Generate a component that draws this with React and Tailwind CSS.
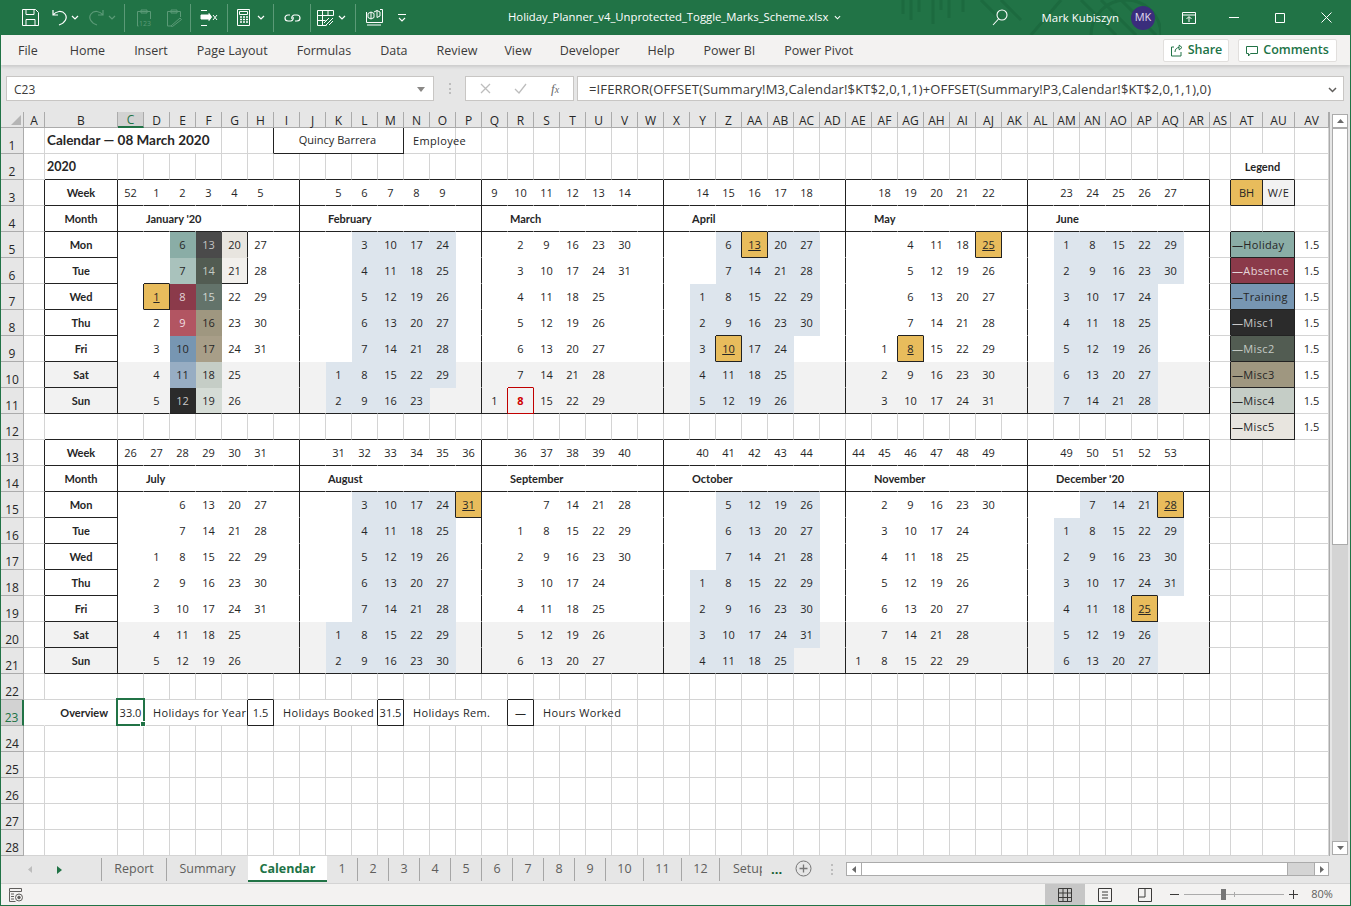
import React from "react";

const LETTERS = "ABCDEFGHIJKLMNOPQRSTUVWXYZ".split("");
const COLS = [...LETTERS, ...LETTERS.slice(0, 22).map((l) => "A" + l)];

// day rows start at Mon; col + dow say where the 1st of the month sits
const MONTHS = [
  { base: 3, start: 2, weekCol: 2, weeks: [52, 1, 2, 3, 4, 5], name: "January '20", col: 3, dow: 2, days: 31 },
  { base: 3, start: 9, weekCol: 10, weeks: [5, 6, 7, 8, 9], name: "February", col: 10, dow: 5, days: 29, shade: true },
  { base: 3, start: 16, weekCol: 16, weeks: [9, 10, 11, 12, 13, 14], name: "March", col: 16, dow: 6, days: 31 },
  { base: 3, start: 23, weekCol: 24, weeks: [14, 15, 16, 17, 18], name: "April", col: 24, dow: 2, days: 30, shade: true, bh: [10, 13] },
  { base: 3, start: 30, weekCol: 31, weeks: [18, 19, 20, 21, 22], name: "May", col: 31, dow: 4, days: 31, bh: [8, 25] },
  { base: 3, start: 37, weekCol: 38, weeks: [23, 24, 25, 26, 27], name: "June", col: 38, dow: 0, days: 30, shade: true },
  { base: 13, start: 2, weekCol: 2, weeks: [26, 27, 28, 29, 30, 31], name: "July", col: 3, dow: 2, days: 31 },
  { base: 13, start: 9, weekCol: 10, weeks: [31, 32, 33, 34, 35, 36], name: "August", col: 10, dow: 5, days: 31, shade: true, bh: [31] },
  { base: 13, start: 16, weekCol: 17, weeks: [36, 37, 38, 39, 40], name: "September", col: 17, dow: 1, days: 30 },
  { base: 13, start: 23, weekCol: 24, weeks: [40, 41, 42, 43, 44], name: "October", col: 24, dow: 3, days: 31, shade: true },
  { base: 13, start: 30, weekCol: 30, weeks: [44, 45, 46, 47, 48, 49], name: "November", col: 30, dow: 6, days: 30 },
  { base: 13, start: 37, weekCol: 38, weeks: [49, 50, 51, 52, 53], name: "December '20", col: 38, dow: 1, days: 31, shade: true, bh: [25, 28] },
];

const JAN_FILLS = {
  6: "bg-[#8aada6]", 7: "bg-[#a9c2bc]", 8: "bg-[#8b3a4a] text-[#e4d5d8]", 9: "bg-[#b25562] text-[#f0dfe2]", 10: "bg-[#7796b2]", 11: "bg-[#97adc3]",
  12: "bg-[#2b2b2b] text-[#c8c8c8]", 13: "bg-[#4a4a4a] text-[#c4c4c4]", 14: "bg-[#525c52] text-[#c4cac4]", 15: "bg-[#63736a] text-[#d0d6d2]",
  16: "bg-[#9f9780]", 17: "bg-[#a89e88]", 18: "bg-[#c5cdc6]", 19: "bg-[#d5dcd6]", 20: "bg-[#e8e5df]", 21: "bg-[#f2f0ec]",
};

const LEGEND = [
  ["—Holiday", "bg-[#8aada6]"],
  ["—Absence", "bg-[#8b3a4a] text-[#e4d5d8]"],
  ["—Training", "bg-[#7796b2]"],
  ["—Misc1", "bg-[#2b2b2b] text-[#c8c8c8]"],
  ["—Misc2", "bg-[#525c52] text-[#c4cac4]"],
  ["—Misc3", "bg-[#9f9780]"],
  ["—Misc4", "bg-[#c5cdc6]"],
  ["—Misc5", "bg-[#e8e5df]"],
];

const DAY_NAMES = ["Mon", "Tue", "Wed", "Thu", "Fri", "Sat", "Sun"];
const BOLD = "font-bold [font-family:Lato,sans-serif] text-[11.5px]";
const WIDE = "tracking-[0.35px]";

const cells = {};
const right = {};
const bottom = {};

const put = (c, r, v) => { cells[c + "," + r] = { ...cells[c + "," + r], ...v }; };
const vLine = (c, r, v = "black") => { right[c + "," + r] = v; };
const hLine = (c, r, v = "black") => { bottom[c + "," + r] = v; };
const box = (c, r, v = "black") => { vLine(c - 1, r, v); vLine(c, r, v); hLine(c, r - 1, v); hLine(c, r, v); };
const inTable = (c, r) => c >= 1 && c <= 43 && ((r >= 3 && r <= 11) || (r >= 13 && r <= 21));

function buildSheet() {
  for (const base of [3, 13]) {
    for (let c = 1; c <= 43; c++) {
      hLine(c, base - 1); hLine(c, base); hLine(c, base + 1); hLine(c, base + 8);
    }
    for (let r = base; r <= base + 8; r++) {
      vLine(0, r); vLine(1, r);
      for (const c of [8, 15, 22, 29, 36, 43]) vLine(c, r);
    }
    put(1, base, { t: "Week", cls: `justify-center ${BOLD}` });
    put(1, base + 1, { t: "Month", cls: `justify-center ${BOLD}` });
    DAY_NAMES.forEach((d, i) => {
      put(1, base + 2 + i, { t: d, cls: `justify-center ${BOLD}` });
      hLine(1, base + 2 + i);
    });
    for (let c = 1; c <= 43; c++) {
      put(c, base + 7, { bg: "bg-[#f2f2f2]" });
      put(c, base + 8, { bg: "bg-[#f2f2f2]" });
    }
  }

  MONTHS.forEach((m) => {
    m.weeks.forEach((w, i) => put(m.weekCol + i, m.base, { t: w, cls: "justify-center text-[10.5px]" }));
    put(m.start + 1, m.base + 1, { t: m.name, cls: `justify-start pl-[2px] ${BOLD}` });
    let col = m.col;
    let dow = m.dow;
    for (let d = 1; d <= m.days; d++) {
      const r = m.base + 2 + dow;
      const v = { t: d, cls: "justify-center" };
      if (m.shade) v.bg = "bg-[#dde5ed]";
      put(col, r, v);
      if (m.bh && m.bh.includes(d)) {
        put(col, r, { bg: "bg-[#e8bc5c]", cls: "justify-center underline" });
        box(col, r);
      }
      if (m.name === "January '20") {
        if (JAN_FILLS[d]) put(col, r, { bg: JAN_FILLS[d] });
        if (d === 1) { put(col, r, { bg: "bg-[#e8bc5c]", cls: "justify-center underline" }); box(col, r); }
        if (d === 20 || d === 21) vLine(col, r);
        if (d === 21) hLine(col, r);
      }
      if (m.name === "March" && d === 8) {
        put(col, r, { cls: "justify-center font-bold text-[#d00000]" });
        box(col, r, "red");
      }
      dow++;
      if (dow > 6) { dow = 0; col++; }
    }
  });

  // title row
  put(1, 1, { t: "Calendar — 08 March 2020", span: 5, cls: "justify-start pl-[2px] pt-[1px] col-span-5 font-bold [font-family:Lato,sans-serif] text-[13.5px]" });
  put(8, 1, { t: "Quincy Barrera", span: 5, cls: "justify-center col-span-5 pr-[2px] pb-[2px]" });
  vLine(7, 1);
  vLine(8, 1);
  hLine(8, 1);
  put(13, 1, { t: "Employee", span: 2, cls: `justify-start pl-[9px] col-span-2 ${WIDE}` });
  put(1, 2, { t: "2020", cls: "justify-start pl-[2px] pt-[2px] font-bold [font-family:Lato,sans-serif] text-[12.5px]" });

  // legend
  put(45, 2, { t: "Legend", span: 2, cls: `justify-center col-span-2 ${BOLD}` });
  put(45, 3, { t: "BH", bg: "bg-[#e8bc5c]", cls: "justify-center" });
  put(46, 3, { t: "W/E", bg: "bg-[#f2f2f2]", cls: `justify-center ${WIDE}` });
  box(45, 3); box(46, 3);
  hLine(46, 4);
  LEGEND.forEach(([label, bg], i) => {
    const r = 5 + i;
    put(45, r, { t: label, span: 2, bg, cls: `justify-start pl-[1px] col-span-2 ${WIDE}` });
    vLine(44, r); vLine(45, r); hLine(45, r); hLine(45, r - 1);
    put(47, r, { t: "1.5", cls: "justify-center" });
  });

  // overview row
  put(0, 23, { noRight: true });
  put(1, 23, { t: "Overview", cls: `justify-end pr-[9px] ${BOLD}` });
  put(2, 23, { t: "33.0", cls: "justify-center text-[10.5px]", selected: true });
  put(3, 23, { t: "Holidays for Year", span: 4, cls: `justify-start pl-[9px] col-span-4 ${WIDE}` });
  put(7, 23, { t: "1.5", cls: "justify-center" });
  box(7, 23);
  vLine(3, 23);
  put(8, 23, { t: "Holidays Booked", span: 4, cls: `justify-start pl-[9px] col-span-4 ${WIDE}` });
  put(12, 23, { t: "31.5", cls: "justify-center text-[10.5px]" });
  box(12, 23);
  vLine(8, 23);
  put(13, 23, { t: "Holidays Rem.", span: 4, cls: `justify-start pl-[9px] col-span-4 ${WIDE}` });
  put(17, 23, { t: "—", cls: "justify-center" });
  box(17, 23);
  vLine(13, 23);
  put(18, 23, { t: "Hours Worked", span: 3, cls: `justify-start pl-[9px] col-span-3 ${WIDE}` });
  vLine(1, 23, "none");
}
buildSheet();

function Cell({ c, r }) {
  const key = c + "," + r;
  const v = cells[key] || {};
  const rv = right[key];
  const bv = bottom[key];
  const table = inTable(c, r);
  let rc = table ? "border-r-transparent" : "border-r-[#d4d4d4]";
  if (rv === "black") rc = "border-r-[#222222]";
  if (rv === "red") rc = "border-r-[#c00000]";
  if (rv === "none" || v.noRight) rc = "border-r-transparent";
  let bc = table ? "border-b-transparent" : "border-b-[#d4d4d4]";
  if (bv === "black") bc = "border-b-[#222222]";
  if (bv === "red") bc = "border-b-[#c00000]";
  return (
    <div className={`relative flex items-center whitespace-nowrap border-r border-b text-[11px] leading-none text-[#262626] ${rc} ${bc} ${v.bg || ""} ${v.cls || ""}`}>
      {v.t}
      {v.selected && (
        <div className="absolute -top-[2px] -left-[2px] z-10 h-[28px] w-[29px] border-2 border-[#217346]">
          <div className="absolute -right-[3px] -bottom-[3px] h-[6px] w-[6px] border border-white bg-[#217346]" />
        </div>
      )}
    </div>
  );
}

function SheetGrid() {
  const out = [];
  out.push(
    <div key="corner" className="relative border-r border-b border-[#ababab] bg-[#e6e6e6]">
      <svg className="absolute right-[2px] bottom-[2px]" width="10" height="10"><path d="M10 0V10H0Z" fill="#b5b5b5" /></svg>
    </div>
  );
  COLS.forEach((name, i) => {
    out.push(
      <div
        key={"h" + name}
        className={`flex items-end justify-center border-r border-b text-[12px] leading-none ${
          i === 2 ? "border-r-[#ababab] border-b-2 border-b-[#217346] bg-[#d2d2d2] text-[#217346]" : "border-r-[#ababab] border-b-[#ababab] bg-[#e6e6e6] text-[#262626]"
        }`}
      >
        {name}
      </div>
    );
  });
  for (let r = 1; r <= 28; r++) {
    out.push(
      <div
        key={"r" + r}
        className={`flex items-end justify-center border-b border-b-[#ababab] pb-[1px] text-[12px] leading-none ${
          r === 23 ? "border-r-2 border-r-[#217346] bg-[#d2d2d2] text-[#217346]" : "border-r border-r-[#ababab] bg-[#e6e6e6] text-[#262626]"
        }`}
      >
        {r}
      </div>
    );
    for (let c = 0; c < COLS.length; c++) {
      const v = cells[c + "," + r];
      out.push(<Cell key={c + "-" + r} c={c} r={r} />);
      if (v && v.span) c += v.span - 1;
    }
  }
  return (
    <div className="grid grid-cols-[23px_21px_73px_repeat(42,26px)_21px_32px_32px_34px] grid-rows-[16px_repeat(28,26px)] bg-white">
      {out}
    </div>
  );
}

function Sep({ cls }) {
  return <div className={`h-[28px] w-px bg-[#5b9a77] ${cls}`} />;
}

function Chev({ dim, cls }) {
  return (
    <svg className={cls} width="8" height="5" viewBox="0 0 8 5" fill="none" stroke={dim ? "#5b9a77" : "#fff"} strokeWidth="1.2">
      <path d="M1 1l3 3 3-3" />
    </svg>
  );
}

function QuickAccess() {
  return (
    <div className="flex items-center text-white">
      <svg className="ml-[21px]" width="17" height="17" viewBox="0 0 17 17" fill="none" stroke="#fff" strokeWidth="1">
        <path d="M.5.5h13l3 3v13H.5z" />
        <path d="M4 .5v5h8v-5M4 16.500v-6h9v6" />
      </svg>
      <svg className="ml-[13px]" width="15" height="17" viewBox="0 0 15 17" fill="none" stroke="#fff" strokeWidth="1.2">
        <path d="M1 1v5h5M1 6c3-4 9-5 12-1s0 9-6 11" />
      </svg>
      <Chev cls="ml-[4px]" />
      <svg className="ml-[10px]" width="15" height="17" viewBox="0 0 15 17" fill="none" stroke="#5b9a77" strokeWidth="1.2">
        <path d="M14 1v5H9M14 6c-3-4-9-5-12-1s0 9 6 11" />
      </svg>
      <Chev dim cls="ml-[4px]" />
      <Sep cls="ml-[8px]" />
      <svg className="ml-[11px]" width="16" height="18" viewBox="0 0 16 18" fill="none" stroke="#5b9a77" strokeWidth="1">
        <path d="M1.500 2.500h13V10M1.500 2.500V17h1" />
        <path d="M5 1h6v3H5z" />
        <text x="3" y="17" fontSize="7" fill="#5b9a77" stroke="none">123</text>
      </svg>
      <svg className="ml-[14px]" width="16" height="18" viewBox="0 0 16 18" fill="none" stroke="#5b9a77" strokeWidth="1">
        <path d="M1.500 2.500h13V8M1.500 2.500V17h4" />
        <path d="M5 1h6v3H5zM5 17l9-8 1.500 1.500-9 7z" />
      </svg>
      <Sep cls="ml-[8px]" />
      <svg className="ml-[9px]" width="18" height="16" viewBox="0 0 18 16" fill="none" stroke="#fff" strokeWidth="1">
        <path d="M1 .5h6M1 15.500h6" />
        <path d="M1 5h8V3.500l2.500 3.500L9 10.500V9H1z" fill="#fff" />
        <path d="M13 5l4 5M17 5l-4 5" />
      </svg>
      <Sep cls="ml-[9px]" />
      <svg className="ml-[9px]" width="13" height="17" viewBox="0 0 13 17" fill="none" stroke="#fff" strokeWidth="1">
        <path d="M.5.5h12v16H.5zM2.500 2.500h8v3h-8z" />
        <path d="M3 8h2M6 8h2M9 8h2M3 10.500h2M6 10.500h2M9 10.500h2M3 13h2M6 13h2M9 13h2" strokeWidth="1.400" />
      </svg>
      <Chev cls="ml-[7px]" />
      <Sep cls="ml-[8px]" />
      <svg className="ml-[10px]" width="17" height="12" viewBox="0 0 17 12" fill="none" stroke="#fff" strokeWidth="1.200">
        <path d="M6 3H4a3 3 0 000 6h3a3 3 0 002-4" />
        <path d="M11 9h2a3 3 0 000-6h-3a3 3 0 00-2 4" />
      </svg>
      <Sep cls="ml-[9px]" />
      <svg className="ml-[6px]" width="17" height="16" viewBox="0 0 17 16" fill="none" stroke="#fff" strokeWidth="1">
        <path d="M.5.5h16v5M.5.5v15h9M.5 5.500h16M.5 10.500h8M5.500.5v15M11 .5v5" />
        <path d="M9 15l7-7M12 15l4-4M7 13l5-5" />
      </svg>
      <Chev cls="ml-[4px]" />
      <Sep cls="ml-[9px]" />
      <svg className="ml-[10px]" width="17" height="17" viewBox="0 0 17 17" fill="none" stroke="#fff" strokeWidth="1">
        <path d="M14 .5h2.500v13H.5V3" />
        <path d="M2 4.500l3-1.500 3 1.500v4L5 10 2 8.500zM8 3l3-1.500L14 3v4l-3 1.500M5 3v7M11 1.500v7M1 16h14" />
      </svg>
      <svg className="ml-[14px]" width="10" height="10" viewBox="0 0 10 10" fill="none" stroke="#fff" strokeWidth="1.100">
        <path d="M1 1.500h8M2 5l3 3 3-3" />
      </svg>
    </div>
  );
}

function TitleBar() {
  return (
    <div className="relative flex h-[35px] items-center justify-between bg-[#217346]">
      <svg className="absolute top-0 left-[890px] h-[35px] w-[270px]" viewBox="0 0 270 35" fill="none" stroke="#1c6a3f" strokeWidth="3">
        <path d="M12 0v14M20 0v20M28 0v12M42 0v24M50 0v10M58 0v18M72 0v12" />
        <path d="M90 0l20 20M110 0l20 20M200 35a35 35 0 0170 0" />
        <path d="M140 35l30-35M190 0l35 35M210 0l35 35M230 0l35 35" />
      </svg>
      <QuickAccess />
      <div className="absolute left-[507px] flex items-center gap-[6px] text-[11.3px] text-white">
        <span>Holiday_Planner_v4_Unprotected_Toggle_Marks_Scheme.xlsx</span>
        <svg width="7" height="5" viewBox="0 0 8 5" fill="none" stroke="#fff" strokeWidth="1.200"><path d="M1 1l3 3 3-3" /></svg>
      </div>
      <div className="relative flex items-center text-white">
        <svg width="16" height="17" viewBox="0 0 16 17" fill="none" stroke="#fff" strokeWidth="1.100">
          <circle cx="10" cy="6" r="5" />
          <path d="M6.500 10L1 16" />
        </svg>
        <span className="ml-[34px] text-[11.4px]">Mark Kubiszyn</span>
        <div className="ml-[12px] flex h-[24px] w-[24px] items-center justify-center rounded-full bg-[#3a2d7c] text-[11px] text-[#e0dcf0]">MK</div>
        <svg className="ml-[27px]" width="14" height="12" viewBox="0 0 14 12" fill="none" stroke="#fff" strokeWidth="1">
          <path d="M.5.5h13v11H.5zM.5 3h13M7 10V5M4.500 7L7 4.500 9.500 7" />
        </svg>
        <svg className="ml-[33px]" width="10" height="1" viewBox="0 0 10 1"><path d="M0 .5h10" stroke="#fff" /></svg>
        <svg className="ml-[36px]" width="10" height="10" viewBox="0 0 10 10" fill="none" stroke="#fff"><path d="M.5.5h9v9h-9z" /></svg>
        <svg className="mr-[18px] ml-[36px]" width="11" height="11" viewBox="0 0 11 11" fill="none" stroke="#fff"><path d="M.5.5l10 10M10.500.5l-10 10" /></svg>
      </div>
    </div>
  );
}

function RibbonTabs() {
  return (
    <div className="relative z-10 flex h-[30px] items-center justify-between bg-[#f3f2f1] shadow-[0_2px_3px_rgba(0,0,0,0.12)]">
      <div className="ml-[17px] flex items-center gap-[29px] pt-[2px] text-[12.5px] text-[#3b3a39]">
        <span className="mr-[3px]">File</span>
        <span>Home</span>
        <span>Insert</span>
        <span>Page Layout</span>
        <span>Formulas</span>
        <span>Data</span>
        <span>Review</span>
        <span className="-ml-[2px]">View</span>
        <span className="-ml-[1px]">Developer</span>
        <span className="-ml-[1px]">Help</span>
        <span>Power BI</span>
        <span>Power Pivot</span>
      </div>
      <div className="mr-[13px] flex items-center gap-[9px] text-[12.5px] font-semibold text-[#217346]">
        <div className="flex h-[23px] w-[66px] items-center justify-center gap-[5px] rounded-[2px] border border-[#e1dfdd] bg-white pt-[1px]">
          <svg width="13" height="13" viewBox="0 0 13 13" fill="none" stroke="#217346"><path d="M9 1.500v4M5 8c0-3 2-4.500 4-4.500M9 1l3 2.500L9 6M4 3H1.500v9H11V8" /></svg>
          Share
        </div>
        <div className="flex h-[23px] w-[99px] items-center justify-center gap-[5px] rounded-[2px] border border-[#e1dfdd] bg-white pt-[1px]">
          <svg width="12" height="12" viewBox="0 0 12 12" fill="none" stroke="#217346"><path d="M.5 1.500h11v7h-7L2.500 11V8.500h-2z" /></svg>
          Comments
        </div>
      </div>
    </div>
  );
}

function FormulaBar() {
  return (
    <div className="flex h-[47px] items-start gap-[3px] bg-[#e6e6e6] pt-[11px] pl-[5px] text-[12px] text-[#3b3a39]">
      <div className="flex h-[25px] w-[428px] items-center justify-between border border-[#c8c6c4] bg-white px-[7px] pt-[2px]">
        <span>C23</span>
        <svg className="mr-[1px]" width="8" height="5"><path d="M0 0h8L4 5z" fill="#8a8886" /></svg>
      </div>
      <div className="flex h-[25px] w-[25px] items-center justify-center">
        <div className="h-[11px] border-l-2 border-dotted border-[#bdbdbd]" />
      </div>
      <div className="flex h-[25px] w-[109px] items-center justify-around border border-[#c8c6c4] bg-white px-[2px]">
        <svg width="11" height="11" viewBox="0 0 11 11" fill="none" stroke="#bdbdbd" strokeWidth="1.300"><path d="M1 1l9 9M10 1l-9 9" /></svg>
        <svg width="13" height="11" viewBox="0 0 13 11" fill="none" stroke="#bdbdbd" strokeWidth="1.300"><path d="M1 6l4 4 7-9" /></svg>
        <span className="text-[13px] text-[#6a6a6a] italic [font-family:'Liberation_Serif',serif]">f<span className="text-[10px]">x</span></span>
      </div>
      <div className="flex h-[25px] w-[767px] items-center justify-between border border-[#c8c6c4] bg-white pt-[2px] pr-[6px] pl-[11px] text-[13px] tracking-[0.13px]">
        <span>=IFERROR(OFFSET(Summary!M3,Calendar!$KT$2,0,1,1)+OFFSET(Summary!P3,Calendar!$KT$2,0,1,1),0)</span>
        <svg width="9" height="6" viewBox="0 0 9 6" fill="none" stroke="#605e5c" strokeWidth="1.500"><path d="M1 1l3.500 3.500L8 1" /></svg>
      </div>
    </div>
  );
}

function VScroll() {
  return (
    <div className="flex w-[21px] flex-col border-l border-[#ababab] bg-[#e6e6e6] pt-[2px] pl-[2px]">
      <div className="flex h-[14px] w-[16px] items-center justify-center border border-[#ababab] bg-white">
        <svg width="7" height="4"><path d="M0 4h7L3.500 0z" fill="#6a6a6a" /></svg>
      </div>
      <div className="flex w-[16px] flex-1 flex-col bg-[#d4d4d4]">
        <div className="h-[417px] border border-[#ababab] bg-white" />
      </div>
      <div className="mb-[1px] flex h-[14px] w-[16px] items-center justify-center border border-[#ababab] bg-white">
        <svg width="7" height="4"><path d="M0 0h7L3.500 4z" fill="#6a6a6a" /></svg>
      </div>
    </div>
  );
}

function SheetTabs() {
  const nums = ["1", "2", "3", "4", "5", "6", "7", "8", "9"];
  return (
    <div className="flex h-[27px] items-start bg-[#e6e6e6] text-[12.5px] text-[#605e5c]">
      <div className="flex h-[27px] w-[100px] items-center">
        <svg className="ml-[27px]" width="4" height="7"><path d="M4 0v7L0 3.500z" fill="#bdbdbd" /></svg>
        <svg className="ml-[25px]" width="5" height="8"><path d="M0 0v8l5-4z" fill="#217346" /></svg>
      </div>
      <div className="mt-[2px] flex h-[23px] w-[66px] items-center justify-center border-x border-[#a6a6a6]">Report</div>
      <div className="mt-[2px] flex h-[23px] w-[81px] items-center justify-center">Summary</div>
      <div className="-mt-[1px] flex h-[27px] w-[79px] items-center justify-center border-b-2 border-[#217346] bg-white pt-[3px] font-bold text-[#217346]">Calendar</div>
      {nums.map((n) => (
        <div key={n} className="mt-[2px] flex h-[23px] w-[31px] items-center justify-center border-r border-[#a6a6a6]">{n}</div>
      ))}
      {["10", "11", "12"].map((n) => (
        <div key={n} className="mt-[2px] flex h-[23px] w-[38px] items-center justify-center border-r border-[#a6a6a6]">{n}</div>
      ))}
      <div className="mt-[2px] flex h-[23px] w-[43px] items-center pl-[13px]"><span className="w-[29px] overflow-hidden">Setup</span></div>
      <div className="mt-[2px] flex h-[23px] w-[32px] items-center pl-[8px] text-[13px] font-bold text-[#0e5c2f]">...</div>
      <svg className="mt-[4px]" width="17" height="17" viewBox="0 0 17 17" fill="none" stroke="#767676"><circle cx="8.500" cy="8.500" r="7.500" /><path d="M8.500 4.500v8M4.500 8.500h8" strokeWidth="1.300" /></svg>
      <div className="mt-[8px] ml-[19px] h-[11px] border-l-2 border-dotted border-[#bdbdbd]" />
      <div className="mt-[6px] ml-[13px] flex h-[14px] w-[483px] border border-[#ababab] bg-[#d4d4d4]">
        <div className="flex w-[15px] items-center justify-center border-r border-[#ababab] bg-white">
          <svg width="4" height="7"><path d="M4 0v7L0 3.500z" fill="#6a6a6a" /></svg>
        </div>
        <div className="w-[426px] border-r border-[#ababab] bg-white" />
        <div className="ml-auto flex w-[14px] items-center justify-center border-l border-[#ababab] bg-white">
          <svg width="4" height="7"><path d="M0 0v7l4-3.500z" fill="#6a6a6a" /></svg>
        </div>
      </div>
    </div>
  );
}

function StatusBar() {
  return (
    <div className="flex h-[22px] items-center justify-between border-t border-[#d4d4d4] bg-[#f3f2f1] text-[11px] text-[#605e5c]">
      <svg className="ml-[8px]" width="14" height="14" viewBox="0 0 14 14" fill="none" stroke="#605e5c">
        <path d="M.5.5h12v3H.5zM.5 3.500v10h6M2 6h3M2 8.500h3M2 11h3" />
        <circle cx="10" cy="9.500" r="3.500" />
        <circle cx="10" cy="9.500" r="1.300" fill="#605e5c" />
      </svg>
      <div className="flex h-full items-center">
        <div className="flex h-full w-[40px] items-center justify-center bg-[#c6c6c6]">
          <svg width="14" height="14" viewBox="0 0 14 14" fill="none" stroke="#3b3a39"><path d="M.5.5h13v13H.5zM.5 5h13M.5 9.500h13M5 .5v13M9.500.5v13" /></svg>
        </div>
        <div className="flex w-[40px] items-center justify-center">
          <svg width="14" height="14" viewBox="0 0 14 14" fill="none" stroke="#3b3a39"><path d="M.5.5h13v13H.5zM4 4h6M4 7h6M4 10h6" /></svg>
        </div>
        <div className="flex w-[40px] items-center justify-center">
          <svg width="14" height="14" viewBox="0 0 14 14" fill="none" stroke="#3b3a39"><path d="M.5.5h13v13H.5zM.5 9h6.500V.5" /></svg>
        </div>
        <div className="ml-[5px] h-px w-[9px] bg-[#3b3a39]" />
        <div className="relative ml-[5px] h-px w-[100px] bg-[#ababab]">
          <div className="absolute -top-[5px] left-[37px] h-[11px] w-[5px] bg-[#767676]" />
          <div className="absolute -top-[2px] left-[50px] h-[5px] w-px bg-[#ababab]" />
        </div>
        <svg className="ml-[5px]" width="9" height="9" viewBox="0 0 9 9" stroke="#3b3a39"><path d="M0 4.500h9M4.500 0v9" /></svg>
        <span className="mr-[17px] ml-[13px] w-[22px] text-center">80%</span>
      </div>
    </div>
  );
}

export default function App() {
  return (
    <div className="flex h-screen w-[1351px] flex-col overflow-hidden border-x border-b border-[#217346] bg-[#e6e6e6] [font-family:'Open_Sans',sans-serif]">
      <TitleBar />
      <RibbonTabs />
      <FormulaBar />
      <div className="flex h-[744px]">
        <SheetGrid />
        <VScroll />
      </div>
      <SheetTabs />
      <StatusBar />
    </div>
  );
}
